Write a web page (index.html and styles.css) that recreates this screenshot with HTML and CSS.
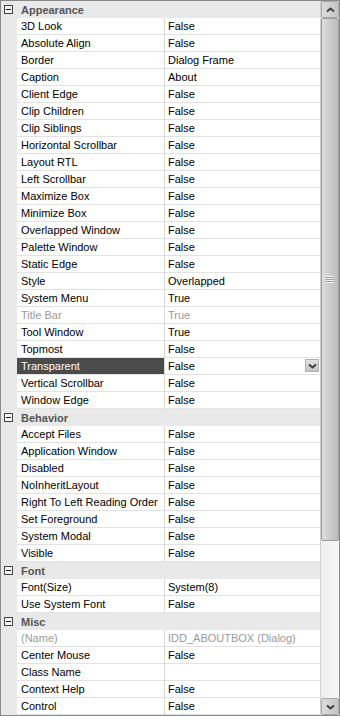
FILE: index.html
```html
<!DOCTYPE html>
<html>
<head>
<meta charset="utf-8">
<link rel="stylesheet" href="styles.css">
</head>
<body>
<div class="pg">
  <div class="grid">
    <div class="cat"><span class="tog"></span><span class="cl">Appearance</span></div>
    <div class="row"><span class="g"></span><span class="n">3D Look</span><span class="v">False</span></div>
    <div class="row"><span class="g"></span><span class="n">Absolute Align</span><span class="v">False</span></div>
    <div class="row"><span class="g"></span><span class="n">Border</span><span class="v">Dialog Frame</span></div>
    <div class="row"><span class="g"></span><span class="n">Caption</span><span class="v">About</span></div>
    <div class="row"><span class="g"></span><span class="n">Client Edge</span><span class="v">False</span></div>
    <div class="row"><span class="g"></span><span class="n">Clip Children</span><span class="v">False</span></div>
    <div class="row"><span class="g"></span><span class="n">Clip Siblings</span><span class="v">False</span></div>
    <div class="row"><span class="g"></span><span class="n">Horizontal Scrollbar</span><span class="v">False</span></div>
    <div class="row"><span class="g"></span><span class="n">Layout RTL</span><span class="v">False</span></div>
    <div class="row"><span class="g"></span><span class="n">Left Scrollbar</span><span class="v">False</span></div>
    <div class="row"><span class="g"></span><span class="n">Maximize Box</span><span class="v">False</span></div>
    <div class="row"><span class="g"></span><span class="n">Minimize Box</span><span class="v">False</span></div>
    <div class="row"><span class="g"></span><span class="n">Overlapped Window</span><span class="v">False</span></div>
    <div class="row"><span class="g"></span><span class="n">Palette Window</span><span class="v">False</span></div>
    <div class="row"><span class="g"></span><span class="n">Static Edge</span><span class="v">False</span></div>
    <div class="row"><span class="g"></span><span class="n">Style</span><span class="v">Overlapped</span></div>
    <div class="row"><span class="g"></span><span class="n">System Menu</span><span class="v">True</span></div>
    <div class="row dis"><span class="g"></span><span class="n">Title Bar</span><span class="v">True</span></div>
    <div class="row"><span class="g"></span><span class="n">Tool Window</span><span class="v">True</span></div>
    <div class="row"><span class="g"></span><span class="n">Topmost</span><span class="v">False</span></div>
    <div class="row sel"><span class="g"></span><span class="n">Transparent</span><span class="v">False<span class="dd"><svg width="9" height="6" viewBox="0 0 9 6"><path d="M1 1.5 L4.5 4.5 L8 1.5" fill="none" stroke="#3a3a3a" stroke-width="1.8"/></svg></span></span></div>
    <div class="row"><span class="g"></span><span class="n">Vertical Scrollbar</span><span class="v">False</span></div>
    <div class="row"><span class="g"></span><span class="n">Window Edge</span><span class="v">False</span></div>
    <div class="cat"><span class="tog"></span><span class="cl">Behavior</span></div>
    <div class="row"><span class="g"></span><span class="n">Accept Files</span><span class="v">False</span></div>
    <div class="row"><span class="g"></span><span class="n">Application Window</span><span class="v">False</span></div>
    <div class="row"><span class="g"></span><span class="n">Disabled</span><span class="v">False</span></div>
    <div class="row"><span class="g"></span><span class="n">NoInheritLayout</span><span class="v">False</span></div>
    <div class="row"><span class="g"></span><span class="n">Right To Left Reading Order</span><span class="v">False</span></div>
    <div class="row"><span class="g"></span><span class="n">Set Foreground</span><span class="v">False</span></div>
    <div class="row"><span class="g"></span><span class="n">System Modal</span><span class="v">False</span></div>
    <div class="row"><span class="g"></span><span class="n">Visible</span><span class="v">False</span></div>
    <div class="cat"><span class="tog"></span><span class="cl">Font</span></div>
    <div class="row"><span class="g"></span><span class="n">Font(Size)</span><span class="v">System(8)</span></div>
    <div class="row"><span class="g"></span><span class="n">Use System Font</span><span class="v">False</span></div>
    <div class="cat"><span class="tog"></span><span class="cl">Misc</span></div>
    <div class="row dis"><span class="g"></span><span class="n">(Name)</span><span class="v">IDD_ABOUTBOX (Dialog)</span></div>
    <div class="row"><span class="g"></span><span class="n">Center Mouse</span><span class="v">False</span></div>
    <div class="row"><span class="g"></span><span class="n">Class Name</span><span class="v"></span></div>
    <div class="row"><span class="g"></span><span class="n">Context Help</span><span class="v">False</span></div>
    <div class="row"><span class="g"></span><span class="n">Control</span><span class="v">False</span></div>
  </div>
  <div class="sb">
    <div class="btn"><svg width="9" height="6" viewBox="0 0 9 6"><path d="M1 4.5 L4.5 1.5 L8 4.5" fill="none" stroke="#3a3a3a" stroke-width="1.8"/></svg></div>
    <div class="thumb"><span class="grip"></span></div>
    <div class="track"></div>
    <div class="btn"><svg width="9" height="6" viewBox="0 0 9 6"><path d="M1 1.5 L4.5 4.5 L8 1.5" fill="none" stroke="#3a3a3a" stroke-width="1.8"/></svg></div>
  </div>
</div>
</body>
</html>
```

FILE: styles.css
```css
html, body {
  margin: 0;
  padding: 0;
  background: #fff;
}
.pg {
  width: 340px;
  height: 716px;
  box-sizing: border-box;
  border: 1px solid #8a8a8a;
  display: flex;
  font-family: "Liberation Sans", Arial, sans-serif;
  font-size: 11px;
  color: #000;
  overflow: hidden;
  background: #fff;
}
.grid {
  flex: 1;
  display: flex;
  flex-direction: column;
  min-width: 0;
}
.cat {
  height: 17px;
  flex: none;
  display: flex;
  align-items: center;
  background: #e9e9e9;
}
.tog {
  width: 9px;
  height: 9px;
  box-sizing: border-box;
  border: 1px solid #444;
  margin-left: 3px;
  margin-right: 7px;
  position: relative;
  background: #f4f4f4;
}
.tog::after {
  content: "";
  position: absolute;
  left: 1px;
  top: 3px;
  width: 5px;
  height: 1px;
  background: #222;
}
.cl {
  font-weight: bold;
  color: #555;
  font-size: 11px;
  padding-left: 1px;
}
.row {
  height: 17px;
  flex: none;
  display: grid;
  grid-template-columns: 16px 148px 1fr;
}
.g {
  background: #e9e9e9;
}
.n, .v {
  box-sizing: border-box;
  border-bottom: 1px solid #e3e3e3;
  line-height: 16px;
  white-space: nowrap;
  overflow: hidden;
  background: #fff;
}
.n {
  padding-left: 4px;
  border-right: 1px solid #d8d8d8;
}
.v {
  padding-left: 3px;
  position: relative;
}
.dis .n, .dis .v {
  color: #9a9a9a;
}
.sel .n {
  background: #4b4b4b;
  color: #fff;
}
.dd {
  position: absolute;
  right: 1px;
  top: 1px;
  width: 14px;
  height: 13px;
  box-sizing: border-box;
  border: 1px solid #b0b0b0;
  background: linear-gradient(#e2e2e2, #c4c4c4);
  display: flex;
  align-items: center;
  justify-content: center;
}
.sb {
  width: 18px;
  flex: none;
  display: flex;
  flex-direction: column;
  background: #f0f0f0;
  border-left: 1px solid #d0d0d0;
}
.btn {
  height: 17px;
  flex: none;
  box-sizing: border-box;
  border: 1px solid #a8a8a8;
  border-radius: 2px;
  background: linear-gradient(90deg, #dcdcdc, #c6c6c6);
  display: flex;
  align-items: center;
  justify-content: center;
}
.thumb {
  height: 523px;
  flex: none;
  box-sizing: border-box;
  border: 1px solid #9c9c9c;
  border-radius: 2px;
  background: linear-gradient(90deg, #dedede, #c8c8c8 60%, #bdbdbd);
  display: flex;
  align-items: center;
  justify-content: center;
}
.grip {
  width: 8px;
  height: 7px;
  background: repeating-linear-gradient(#f4f4f4 0 1px, #9a9a9a 1px 2px);
}
.track {
  flex: 1;
  background: linear-gradient(90deg, #eeeeee, #f7f7f7);
}
```
